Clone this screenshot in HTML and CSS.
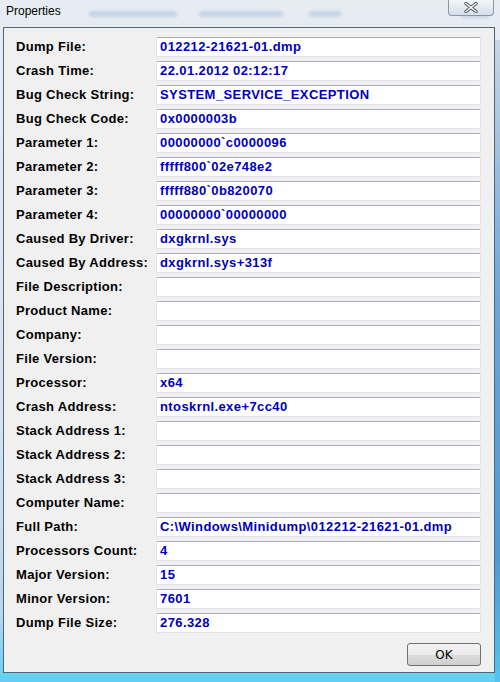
FILE: index.html
```html
<!DOCTYPE html>
<html>
<head>
  <title>Properties</title>
  <link rel="stylesheet" href="styles.css">
</head>
<body>
  <div class="window">
    <div class="titlebar">
      <span class="haze haze-a"></span>
      <span class="haze haze-b"></span>
      <span class="haze haze-c"></span>
      <span class="haze haze-d"></span>
      <span class="title">Properties</span>
      <button class="close" title="Close">
        <svg width="20" height="11" viewBox="0 0 20 11">
          <path d="M5 1.5 L15 9.5 M15 1.5 L5 9.5" stroke="#4a5560" stroke-width="3.4" stroke-linecap="round"/>
          <path d="M5 1.5 L15 9.5 M15 1.5 L5 9.5" stroke="#ffffff" stroke-width="1.6" stroke-linecap="round"/>
        </svg>
      </button>
    </div>
    <div class="client">
      <div class="props">
        <label>Dump File:</label><div class="field">012212-21621-01.dmp</div>
        <label>Crash Time:</label><div class="field">22.01.2012 02:12:17</div>
        <label>Bug Check String:</label><div class="field">SYSTEM_SERVICE_EXCEPTION</div>
        <label>Bug Check Code:</label><div class="field">0x0000003b</div>
        <label>Parameter 1:</label><div class="field">00000000`c0000096</div>
        <label>Parameter 2:</label><div class="field">fffff800`02e748e2</div>
        <label>Parameter 3:</label><div class="field">fffff880`0b820070</div>
        <label>Parameter 4:</label><div class="field">00000000`00000000</div>
        <label>Caused By Driver:</label><div class="field">dxgkrnl.sys</div>
        <label>Caused By Address:</label><div class="field">dxgkrnl.sys+313f</div>
        <label>File Description:</label><div class="field"></div>
        <label>Product Name:</label><div class="field"></div>
        <label>Company:</label><div class="field"></div>
        <label>File Version:</label><div class="field"></div>
        <label>Processor:</label><div class="field">x64</div>
        <label>Crash Address:</label><div class="field">ntoskrnl.exe+7cc40</div>
        <label>Stack Address 1:</label><div class="field"></div>
        <label>Stack Address 2:</label><div class="field"></div>
        <label>Stack Address 3:</label><div class="field"></div>
        <label>Computer Name:</label><div class="field"></div>
        <label>Full Path:</label><div class="field">C:\Windows\Minidump\012212-21621-01.dmp</div>
        <label>Processors Count:</label><div class="field">4</div>
        <label>Major Version:</label><div class="field">15</div>
        <label>Minor Version:</label><div class="field">7601</div>
        <label>Dump File Size:</label><div class="field">276.328</div>
      </div>
      <div class="buttons">
        <button class="ok">OK</button>
      </div>
    </div>
  </div>
</body>
</html>
```

FILE: styles.css
```css
body {
  margin: 0;
  background: #dfe6ee;
}

.window {
  width: 500px;
  height: 682px;
  box-sizing: border-box;
  display: flex;
  flex-direction: column;
  padding: 0 5px 9px 3px;
  background: linear-gradient(to bottom, #e6ecf2 0%, #d9e3ed 60%, #b9d6ee 90%, #5fd0f2 100%);
  position: relative;
}

/* glass frame on the right */
.window::after {
  content: "";
  position: absolute;
  right: 0;
  top: 40px;
  bottom: 0;
  width: 5px;
  background: linear-gradient(to bottom, #c9d6e4, #6fa6d6 40%, #4e9ad6 80%, #52c4ee);
}

.titlebar {
  height: 27px;
  position: relative;
  flex: none;
}

.title {
  position: absolute;
  left: 3px;
  top: 4px;
  font-family: "Liberation Sans", sans-serif;
  font-size: 12px;
  color: #000;
}

.haze {
  position: absolute;
  height: 6px;
  border-radius: 3px;
  background: #c6d4e6;
  filter: blur(1.5px);
}

.haze-a { left: 86px; top: 11px; width: 88px; }
.haze-b { left: 196px; top: 11px; width: 84px; }
.haze-c { left: 306px; top: 11px; width: 32px; }
.haze-d { left: 458px; top: 12px; width: 28px; }

.close {
  position: absolute;
  right: 1px;
  top: 0;
  width: 46px;
  height: 16px;
  padding: 0;
  border: 1px solid #8a96a4;
  border-top: none;
  border-radius: 0 0 4px 4px;
  background: linear-gradient(to bottom, #f4f6f9, #e4eaf0 50%, #d6dfe9);
  display: flex;
  align-items: center;
  justify-content: center;
  z-index: 1;
}

.client {
  flex: 1;
  background: #f0f0f0;
  border: 1px solid #4d6679;
  padding: 9px 13px 0 12px;
  font-family: "Liberation Sans", sans-serif;
  font-size: 13px;
  font-weight: bold;
}

.props {
  display: grid;
  grid-template-columns: 140px 1fr;
  row-gap: 4px;
}

.props label {
  line-height: 20px;
  letter-spacing: 0.3px;
  color: #000;
  white-space: nowrap;
}

.field {
  height: 20px;
  box-sizing: border-box;
  background: #fff;
  border: 1px solid #e2e3ea;
  border-top-color: #abadb3;
  border-radius: 2px;
  padding-left: 3px;
  line-height: 18px;
  letter-spacing: 0.4px;
  color: #0000c0;
  white-space: nowrap;
  overflow: hidden;
}

.buttons {
  display: flex;
  justify-content: flex-end;
  margin-top: 10px;
}

.ok {
  width: 74px;
  height: 23px;
  border: 1px solid #707070;
  border-radius: 3px;
  background: linear-gradient(to bottom, #f2f2f2 0%, #ebebeb 50%, #dddddd 51%, #cfcfcf 100%);
  font-family: "DejaVu Sans", sans-serif;
  font-size: 12px;
  color: #000;
  padding: 0;
}
```
